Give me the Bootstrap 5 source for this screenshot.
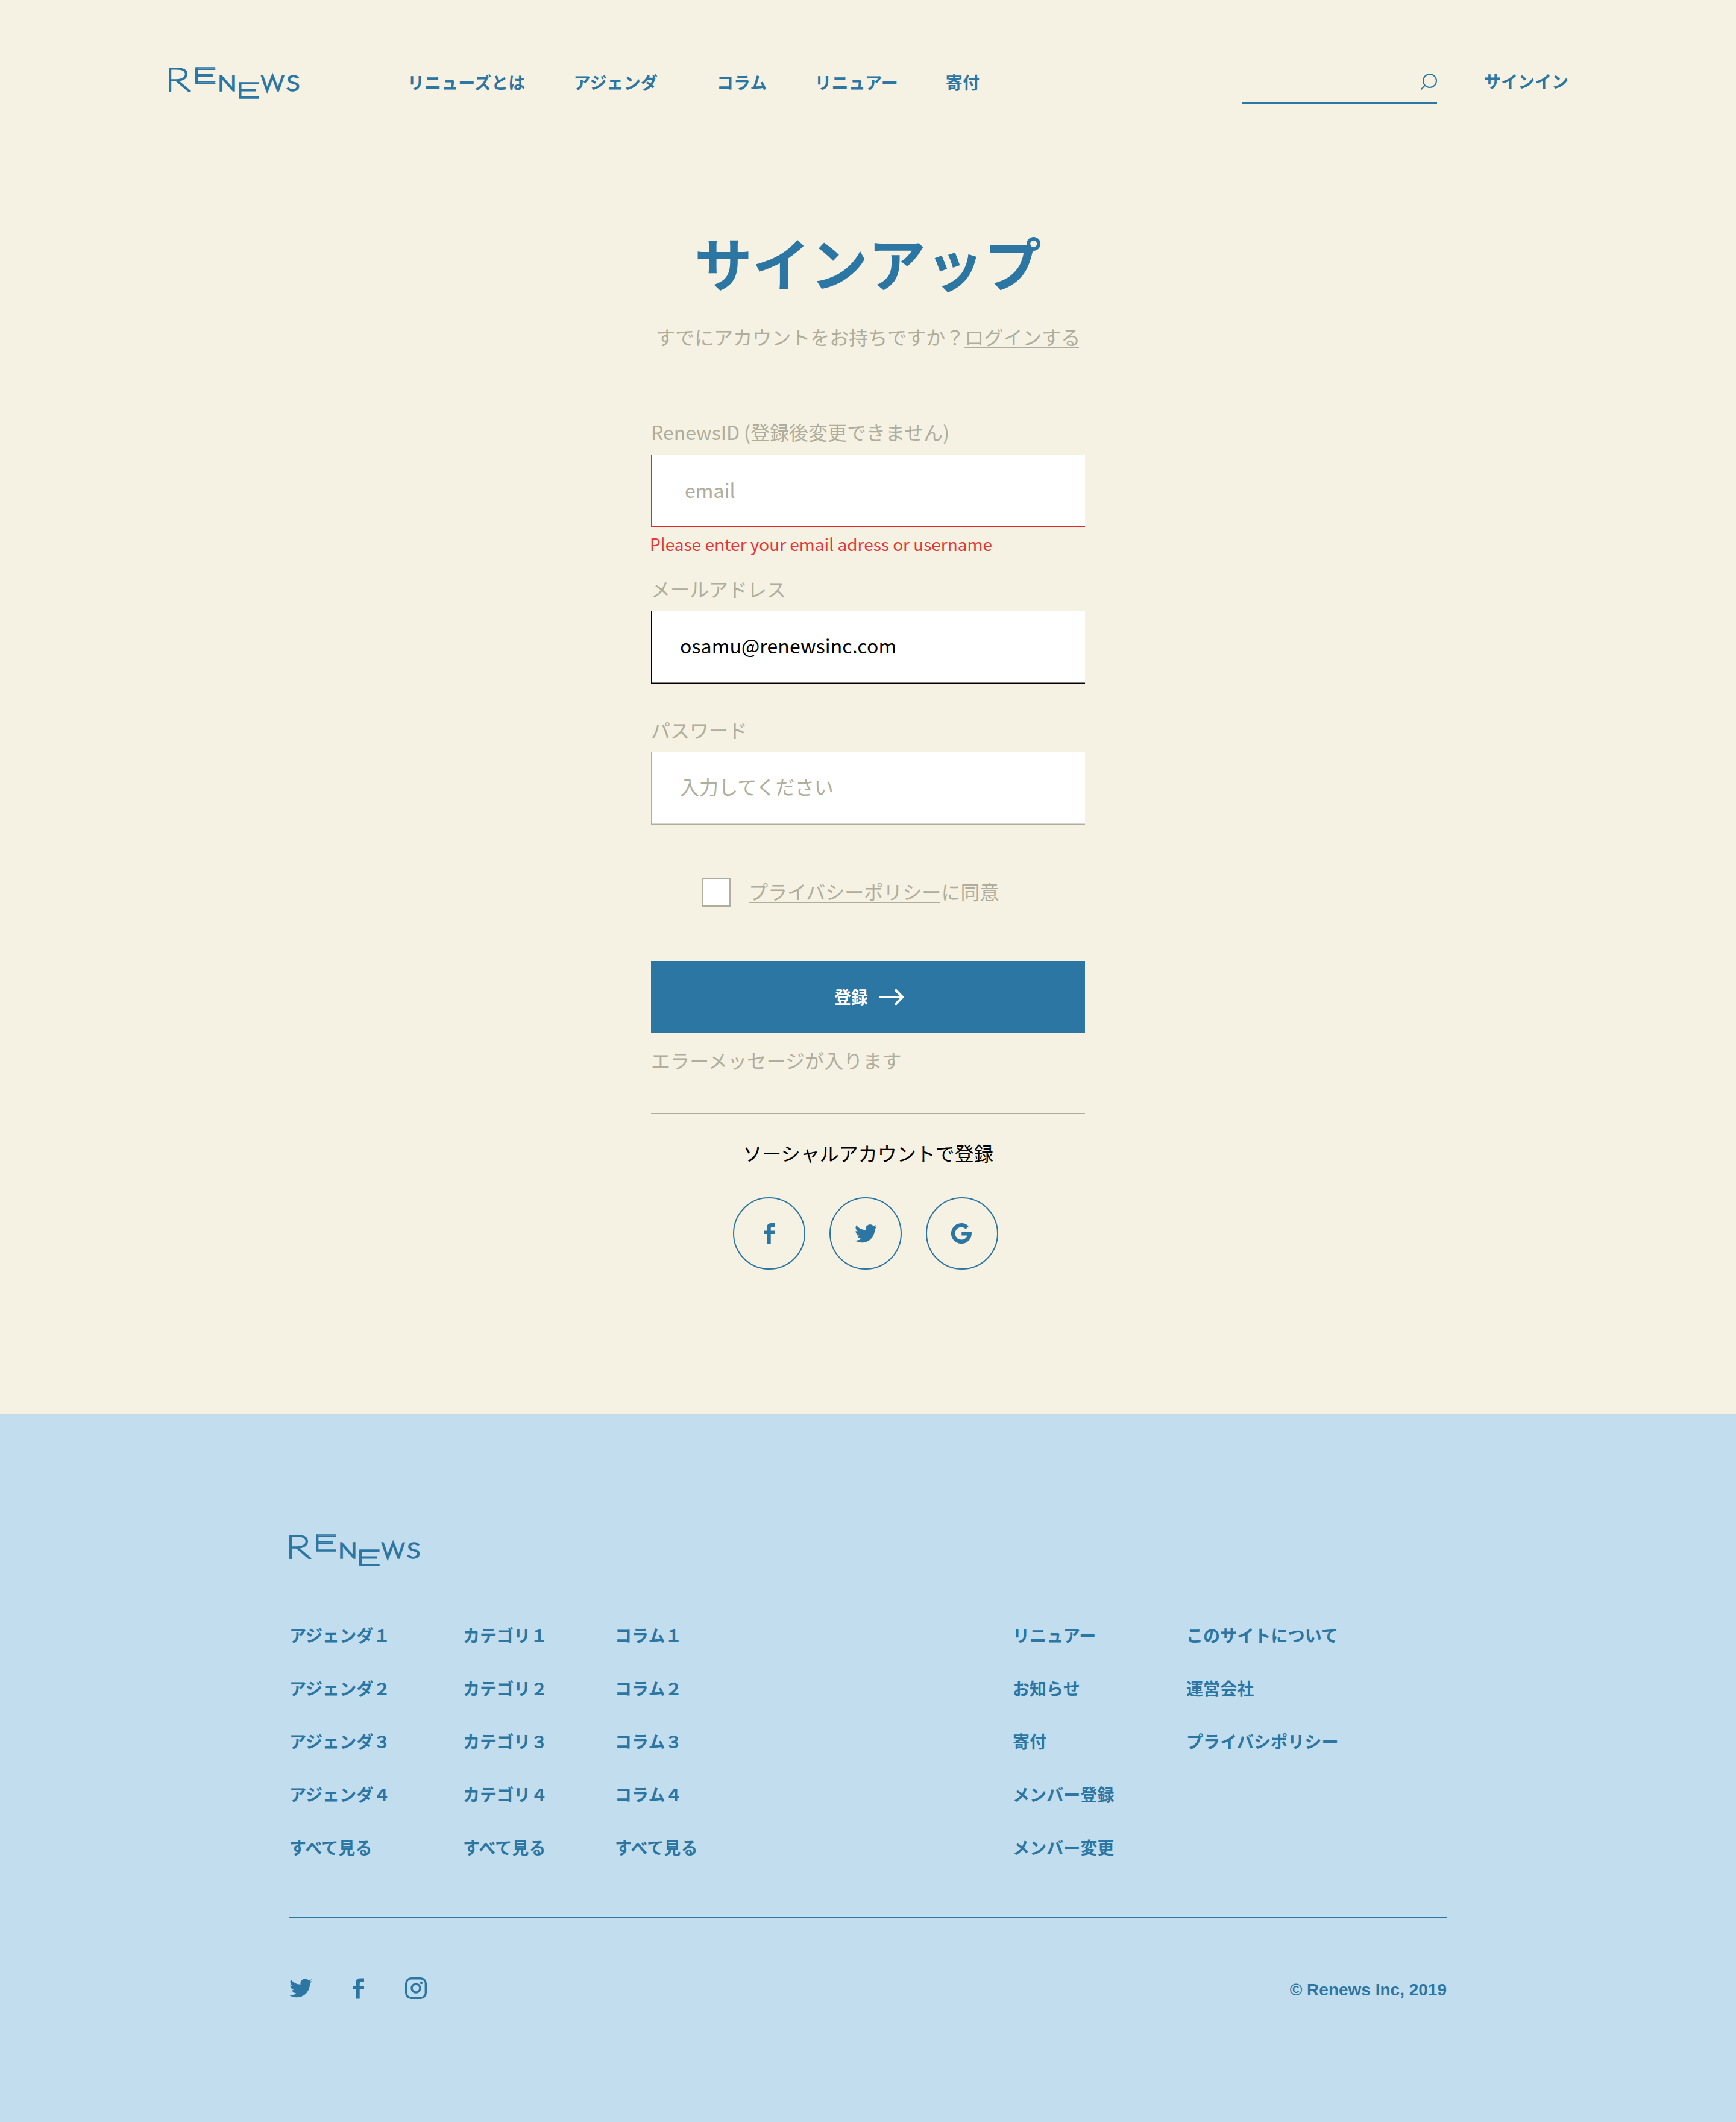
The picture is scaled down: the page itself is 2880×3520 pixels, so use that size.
<!DOCTYPE html>
<html lang="ja">
<head>
<meta charset="utf-8">
<title>Renews サインアップ</title>
<meta name="viewport" content="width=device-width, initial-scale=1">
<link href="https://cdn.jsdelivr.net/npm/bootstrap@5.3.0/dist/css/bootstrap.min.css" rel="stylesheet">
<style>
  :root { --rn-blue: #2c76a3; --rn-sand: #f5f1e3; --rn-grey: #afad9c; --rn-sky: #c2ddee; --rn-red: #e83535; }
  body { background: var(--rn-sand); color: #000; font-family: "Noto Sans CJK JP", sans-serif; font-size: 32px; line-height: 48px; }
  a { color: inherit; text-decoration: none; }
  .rn-blue { color: var(--rn-blue); }
  .rn-grey { color: var(--rn-grey); }
  .rn-header { height: 364px; padding: 100px 278px 0 280px; }
  .rn-header, .rn-footer { font-size: 28px; line-height: 40px; font-weight: 700; color: var(--rn-blue); letter-spacing: .12px; }
  .rn-header > .rn-logo { margin-top: 11px; }
  .rn-logo { width: 216px; height: 53px; overflow: visible; display: block; letter-spacing: 0; }
  .rn-logo text { font-family: Lato, sans-serif; font-weight: 100; fill: var(--rn-blue); stroke: var(--rn-blue); stroke-width: 3.4px; }
  .rn-logo .rn-wide { stroke-width: 1.4px; }
  .rn-logo .rn-tall { stroke-width: 2.2px; }
  .rn-nav { margin: 16px 0 0 180px; }
  .rn-nav .nav-link { padding: 0; color: inherit; font-size: inherit; margin-right: 78px; white-space: nowrap; }
  .rn-nav .nav-link:nth-child(1) { margin-right: 80px; }
  .rn-nav .nav-link:nth-child(2) { margin-right: 98px; }
  .rn-nav .nav-link:nth-child(3) { margin-right: 79px; }
  .rn-nav .nav-link:nth-child(4) { margin-right: 79px; }
  .rn-search { width: 324px; height: 72px; border-bottom: 2px solid var(--rn-blue); padding-top: 21px; }
  .rn-signin { margin: 14px 0 0 78px; letter-spacing: 0; }
  .rn-signup { width: 720px; padding-bottom: 240px; }
  .rn-title { font-size: 96px; line-height: 140px; font-weight: 700; margin: 0; }
  .rn-sub { margin: 30px 0 110px; white-space: nowrap; padding-left: 8px; }
  .rn-line { background: linear-gradient(currentColor, currentColor) 0 42px / calc(100% - 2px) 2px no-repeat; display: inline-block; }
  .rn-label { display: block; margin-bottom: 14px; color: var(--rn-grey); }
  .rn-field.form-control { height: 120px; padding: 0 20px 7px 47px; font-size: 32px; line-height: 48px; letter-spacing: .1px; border: 0 solid var(--bd); border-width: 0 0 1px 1px; border-radius: 0; background: #fff; color: #000; box-shadow: inset 1px 0 0 color-mix(in srgb, var(--bd) 35%, #fff), inset 0 -1px 0 color-mix(in srgb, var(--bd) 50%, #fff); --bd: var(--rn-grey); }
  .rn-field.form-control::placeholder { color: var(--rn-grey); opacity: 1; }
  .rn-field.form-control.is-wrong { --bd: #e02a2a; padding: 0 20px 3px 55px; }
  .rn-field.form-control.is-filled { --bd: #000; }
  .rn-error { font-size: 28px; line-height: 40px; color: var(--rn-red); margin: 8px 0 30px -2px; }
  .rn-gap { margin-top: 52px; }
  .rn-agree { margin: 88px 0 90px 84px; }
  .rn-agree .form-check-input { width: 48px; height: 48px; margin: 0 30px 0 0; float: none; border: 2px solid var(--rn-grey); border-radius: 0; background: #fff; }
  .rn-agree label { line-height: 44px; }
  .rn-agree .rn-line { background-position: 0 40px; }
  .rn-submit.btn { height: 120px; border: 0; border-radius: 0; background: var(--rn-blue); color: #fff; font-size: 28px; font-weight: 700; line-height: 40px; padding: 0 0 2px 4px; gap: 18px; }
  .rn-submit svg { margin-top: 2px; }
  .rn-note { margin: 20px 0 0; letter-spacing: .12px; }
  .rn-rule { height: 2px; background: var(--rn-grey); margin: 64px 0 40px; }
  .rn-social { gap: 40px; margin: 50px 0 0 136px; }
  .rn-social a { width: 120px; height: 120px; border: 2px solid var(--rn-blue); }
  .rn-social .rn-fb { margin-left: 1px; }
  .rn-social .rn-goog { margin-right: 2px; }
  .rn-footer { background: var(--rn-sky); height: 1174px; padding-top: 199px; }
  .rn-wrap { width: 1920px; }
  .rn-cols { display: grid; grid-template-columns: 288px 252px 660px 288px auto; margin-top: 94px; }
  .rn-cols ul { gap: 48px; }
  .rn-foot { border-top: 2px solid var(--rn-blue); margin-top: 96px; padding-top: 98px; }
  .rn-icons { gap: 68px; }
  .rn-copy { font-family: "Liberation Sans", sans-serif; margin-top: 1px; letter-spacing: 0; }
</style>
</head>
<body>
<svg width="0" height="0" class="position-absolute">
  <defs>
    <symbol id="tw" viewBox="0 0 24 20"><path fill="currentColor" d="M24 2.4a9.800 9.800 0 0 1-2.830.780 4.900 4.900 0 0 0 2.170-2.730 9.900 9.900 0 0 1-3.130 1.200A4.920 4.920 0 0 0 11.800 6.100 13.980 13.980 0 0 1 1.670.960a4.920 4.920 0 0 0 1.520 6.570 4.900 4.900 0 0 1-2.230-.610v.060a4.930 4.930 0 0 0 3.950 4.830 4.900 4.900 0 0 1-2.220.080 4.930 4.930 0 0 0 4.600 3.420A9.870 9.870 0 0 1 0 17.350a13.940 13.940 0 0 0 7.550 2.210c9.060 0 14.010-7.500 14.010-14.010l-.020-.640A10 10 0 0 0 24 2.400z"/></symbol>
    <symbol id="fb" viewBox="0 0 18 34"><path fill="currentColor" d="M4 34V18H0v-5.500h4V8.500C4 3 6.500 0 11.500 0H18v6h-4c-2.700 0-3.300 1-3.300 3.200v3.300H18V18h-7.300v16z"/></symbol>
  </defs>
</svg>

<header class="rn-header d-flex align-items-start">
  <!-- The offset copies give the wide letters heavier horizontal bars -->
  <svg class="rn-logo" viewBox="0 0 216 53" role="img" aria-label="Renews">
    <text id="lgR" class="rn-tall" transform="translate(-6.400 38.500) scale(1.390 1)" font-size="51">R</text>
    <text id="lgE1" class="rn-wide" transform="translate(37.200 25.200) scale(2.120 1)" font-size="34.600">E</text>
    <text transform="translate(81.600 39.200) scale(1.200 1)" font-size="34.200">N</text>
    <text id="lgE2" class="rn-wide" transform="translate(109.300 49.800) scale(2.170 1)" font-size="34">E</text>
    <text transform="translate(153.400 39.200) scale(1.080 1)" font-size="34.400">W</text>
    <text transform="translate(195.500 39.200) scale(1.180 1)" font-size="34.200">S</text>
    <use href="#lgR" y="1.200"/>
    <use href="#lgE1" y="1.500"/><use href="#lgE1" y="3"/>
    <use href="#lgE2" y="1.200"/><use href="#lgE2" y="2.400"/>
  </svg>
  <nav class="rn-nav nav flex-nowrap">
    <a class="nav-link" href="#">リニューズとは</a>
    <a class="nav-link" href="#">アジェンダ</a>
    <a class="nav-link" href="#">コラム</a>
    <a class="nav-link" href="#">リニュアー</a>
    <a class="nav-link" href="#">寄付</a>
  </nav>
  <div class="rn-search ms-auto d-flex justify-content-end align-items-start">
    <svg width="28" height="28" viewBox="0 0 28 28" fill="none" stroke="#2c76a3" stroke-width="2"><circle cx="16" cy="13" r="11"/><path d="M8 20.500 1.500 27.500"/></svg>
  </div>
  <a class="rn-signin" href="#">サインイン</a>
</header>

<main class="rn-signup mx-auto">
  <h1 class="rn-title rn-blue text-center">サインアップ</h1>
  <p class="rn-sub rn-grey">すでにアカウントをお持ちですか？<a class="rn-line" href="#">ログインする</a></p>
  <form>
    <label class="rn-label" for="rid">RenewsID (登録後変更できません)</label>
    <input class="form-control rn-field is-wrong" id="rid" type="text" placeholder="email">
    <p class="rn-error">Please enter your email adress or username</p>
    <label class="rn-label" for="mail">メールアドレス</label>
    <input class="form-control rn-field is-filled" id="mail" type="text" value="osamu@renewsinc.com">
    <label class="rn-label rn-gap" for="pass">パスワード</label>
    <input class="form-control rn-field" id="pass" type="password" placeholder="入力してください">
    <div class="rn-agree d-flex align-items-start">
      <input class="form-check-input" type="checkbox" id="agree">
      <label for="agree" class="rn-grey"><a class="rn-line" href="#">プライバシーポリシー</a>に同意</label>
    </div>
    <button type="button" class="btn rn-submit w-100 d-flex align-items-center justify-content-center">登録
      <svg width="42" height="28" viewBox="0 0 42 28" fill="none" stroke="#fff" stroke-width="4"><path d="M0 14h39M27 1.500 39.200 14 27 26.500"/></svg>
    </button>
  </form>
  <p class="rn-note rn-grey">エラーメッセージが入ります</p>
  <div class="rn-rule"></div>
  <p class="text-center mb-0">ソーシャルアカウントで登録</p>
  <div class="rn-social d-flex rn-blue">
    <a class="rounded-circle d-flex align-items-center justify-content-center" href="#" aria-label="Facebook"><svg class="rn-fb" width="18" height="34"><use href="#fb"/></svg></a>
    <a class="rounded-circle d-flex align-items-center justify-content-center" href="#" aria-label="Twitter"><svg width="37" height="31"><use href="#tw"/></svg></a>
    <a class="rounded-circle d-flex align-items-center justify-content-center" href="#" aria-label="Google"><svg class="rn-goog" width="34" height="34" viewBox="0 0 34 34"><path fill="none" stroke="#2c76a3" stroke-width="6.600" d="M26.600 7.400A13.700 13.700 0 1 0 30.600 17.200H17.300"/></svg></a>
  </div>
</main>

<footer class="rn-footer">
  <div class="rn-wrap mx-auto">
    <svg class="rn-logo" viewBox="0 0 216 53" role="img" aria-label="Renews">
      <text class="rn-tall" transform="translate(-6.400 38.500) scale(1.390 1)" font-size="51">R</text>
      <text class="rn-wide" transform="translate(37.200 25.200) scale(2.120 1)" font-size="34.600">E</text>
      <text transform="translate(81.600 39.200) scale(1.200 1)" font-size="34.200">N</text>
      <text class="rn-wide" transform="translate(109.300 49.800) scale(2.170 1)" font-size="34">E</text>
      <text transform="translate(153.400 39.200) scale(1.080 1)" font-size="34.400">W</text>
      <text transform="translate(195.500 39.200) scale(1.180 1)" font-size="34.200">S</text>
      <use href="#lgR" y="1.200"/>
      <use href="#lgE1" y="1.500"/><use href="#lgE1" y="3"/>
      <use href="#lgE2" y="1.200"/><use href="#lgE2" y="2.400"/>
    </svg>
    <div class="rn-cols">
      <ul class="list-unstyled d-flex flex-column mb-0">
        <li><a href="#">アジェンダ１</a></li><li><a href="#">アジェンダ２</a></li><li><a href="#">アジェンダ３</a></li><li><a href="#">アジェンダ４</a></li><li><a href="#">すべて見る</a></li>
      </ul>
      <ul class="list-unstyled d-flex flex-column mb-0">
        <li><a href="#">カテゴリ１</a></li><li><a href="#">カテゴリ２</a></li><li><a href="#">カテゴリ３</a></li><li><a href="#">カテゴリ４</a></li><li><a href="#">すべて見る</a></li>
      </ul>
      <ul class="list-unstyled d-flex flex-column mb-0">
        <li><a href="#">コラム１</a></li><li><a href="#">コラム２</a></li><li><a href="#">コラム３</a></li><li><a href="#">コラム４</a></li><li><a href="#">すべて見る</a></li>
      </ul>
      <ul class="list-unstyled d-flex flex-column mb-0">
        <li><a href="#">リニュアー</a></li><li><a href="#">お知らせ</a></li><li><a href="#">寄付</a></li><li><a href="#">メンバー登録</a></li><li><a href="#">メンバー変更</a></li>
      </ul>
      <ul class="list-unstyled d-flex flex-column mb-0">
        <li><a href="#">このサイトについて</a></li><li><a href="#">運営会社</a></li><li><a href="#">プライバシポリシー</a></li>
      </ul>
    </div>
    <div class="rn-foot d-flex align-items-start justify-content-between">
      <div class="rn-icons d-flex align-items-center">
        <a href="#" class="d-flex" aria-label="Twitter"><svg width="38" height="32"><use href="#tw"/></svg></a>
        <a href="#" class="d-flex" aria-label="Facebook"><svg width="18" height="35"><use href="#fb"/></svg></a>
        <a href="#" class="d-flex" aria-label="Instagram"><svg width="36" height="36" viewBox="0 0 36 36" fill="none" stroke="#2c76a3" stroke-width="3.400"><rect x="1.700" y="1.700" width="32.600" height="32.600" rx="8.500"/><circle cx="18" cy="18" r="7"/><circle cx="27" cy="9" r="2.200" fill="#2c76a3" stroke="none"/></svg></a>
      </div>
      <span class="rn-copy">© Renews Inc, 2019</span>
    </div>
  </div>
</footer>
<script src="https://cdn.jsdelivr.net/npm/bootstrap@5.3.0/dist/js/bootstrap.bundle.min.js"></script>
</body>
</html>
